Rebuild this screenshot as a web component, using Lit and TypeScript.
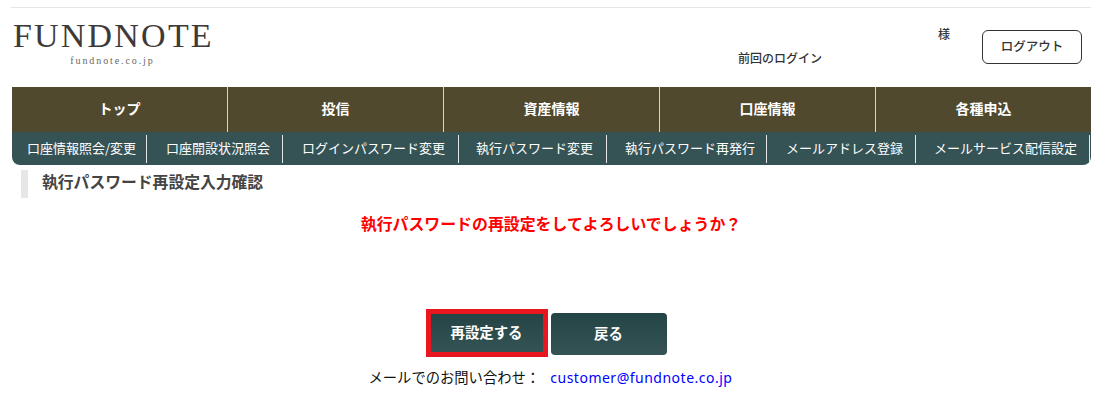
import { LitElement, css, html } from "lit";
import { customElement } from "lit/decorators.js";

const mainMenu = ["トップ", "投信", "資産情報", "口座情報", "各種申込"];
const subMenu = [
  ["口座情報照会/変更", 135, 15],
  ["口座開設状況照会", 136, 19],
  ["ログインパスワード変更", 176, 19],
  ["執行パスワード変更", 148, 17],
  ["執行パスワード再発行", 160, 18],
  ["メールアドレス登録", 149, 19],
  ["メールサービス配信設定", 174, 18],
] as const;

@customElement("app-root")
export class AppRoot extends LitElement {
  static styles = css`
    :host {
      display: block;
      width: 1105px;
      height: 417px;
      overflow: hidden;
      background: #fff;
      color: #333;
      font-family: "Noto Sans CJK JP", "Liberation Sans", sans-serif;
      font-size: 12px;
    }

    .page {
      width: 1080px;
      margin-left: 11px;
      padding-top: 7px;
    }

    .header {
      display: flex;
      height: 79px;
      border-top: 1px solid #e6e6e6;
    }

    .logo {
      width: 199px;
      margin: 16px 0 0 2px;
      text-align: center;
      color: #3e3a39;
      font-family: "Liberation Serif", serif;
    }

    .logo-name {
      font-size: 34px;
      line-height: 24px;
      letter-spacing: 2.2px;
      white-space: nowrap;
    }

    .logo-url {
      margin-top: 7px;
      font-size: 10px;
      line-height: 12px;
      letter-spacing: 1.9px;
      color: #666;
    }

    .last-login {
      margin: 42px 0 0 526px;
      line-height: 16px;
      font-weight: 500;
      white-space: nowrap;
    }

    .user {
      margin: 19px 0 0 116px;
      line-height: 14px;
      font-weight: 500;
    }

    .logout {
      box-sizing: border-box;
      width: 100px;
      height: 34px;
      margin: 22px 0 0 32px;
      border: 1px solid #333;
      border-radius: 6px;
      background: #fff;
      color: #333;
      font: inherit;
      font-size: 12.5px;
      font-weight: 500;
      padding: 0 0 4px;
    }

    .main-nav {
      display: grid;
      grid-template-columns: 215px repeat(4, 216px);
      height: 45px;
      margin-left: 1px;
      background: #50492d;
      color: #fff;
      font-size: 14px;
      font-weight: 700;
    }

    .main-nav div {
      display: flex;
      align-items: center;
      justify-content: center;
      padding-bottom: 3px;
      border-left: 1px solid #d8d5c8;
    }

    .main-nav div:first-child {
      border-left: 0;
    }

    .sub-nav {
      display: flex;
      align-items: center;
      height: 33px;
      margin-left: 1px;
      border-radius: 0 0 8px 8px;
      background: #355355;
      color: #fff;
      font-size: 13px;
    }

    .sub-nav div {
      flex: none;
      box-sizing: border-box;
      display: flex;
      align-items: center;
      height: 28px;
      padding-bottom: 2px;
      border-right: 1px solid #e6e6e6;
      white-space: nowrap;
    }

    .title {
      margin: 5px 0 0 10px;
      height: 28px;
      padding-left: 14px;
      border-left: 7px solid #e6e6e6;
      font-size: 15.8px;
      font-weight: 700;
      line-height: 24px;
      color: #444;
    }

    .message {
      margin-top: 14px;
      text-align: center;
      color: #f00;
      font-size: 15.9px;
      font-weight: 700;
      line-height: 24px;
    }

    .actions {
      display: flex;
      justify-content: center;
      align-items: center;
      gap: 3px;
      margin-top: 73px;
      padding-right: 10px;
    }

    .btn {
      box-sizing: border-box;
      height: 42px;
      border: 0;
      border-radius: 4px;
      background: linear-gradient(#234445, #355355);
      color: #fff;
      font: inherit;
      font-size: 14.4px;
      font-weight: 700;
      padding: 0 0 4px;
    }

    .btn.primary {
      width: 122px;
      height: 48px;
      border: 5px solid #e8171f;
      border-radius: 0;
    }

    .btn.back {
      width: 116px;
      margin-top: 2px;
    }

    .contact {
      margin-top: 9px;
      padding-right: 1px;
      text-align: center;
      color: #111;
      font-size: 14.3px;
      line-height: 22px;
      font-weight: 400;
    }

    .contact a {
      margin-left: 7px;
      color: #00f;
      text-decoration: none;
      font-family: "Noto Sans", "Liberation Sans", sans-serif;
      font-size: 14px;
      letter-spacing: 0.5px;
    }
  `;

  render() {
    return html`
      <div class="page">
        <div class="header">
          <div class="logo">
            <div class="logo-name">FUNDNOTE</div>
            <div class="logo-url">fundnote.co.jp</div>
          </div>
          <div class="last-login">前回のログイン</div>
          <div class="user">様</div>
          <button class="logout">ログアウト</button>
        </div>
        <div class="main-nav">
          ${mainMenu.map((m) => html`<div>${m}</div>`)}
        </div>
        <div class="sub-nav">
          ${subMenu.map(
            ([label, w, pad]) =>
              html`<div style="width:${w}px;padding-left:${pad}px">${label}</div>`,
          )}
        </div>
        <div class="title">執行パスワード再設定入力確認</div>
        <div class="message">執行パスワードの再設定をしてよろしいでしょうか？</div>
        <div class="actions">
          <button class="btn primary">再設定する</button>
          <button class="btn back">戻る</button>
        </div>
        <div class="contact">
          メールでのお問い合わせ： <a href="#">customer@fundnote.co.jp</a>
        </div>
      </div>
    `;
  }
}
